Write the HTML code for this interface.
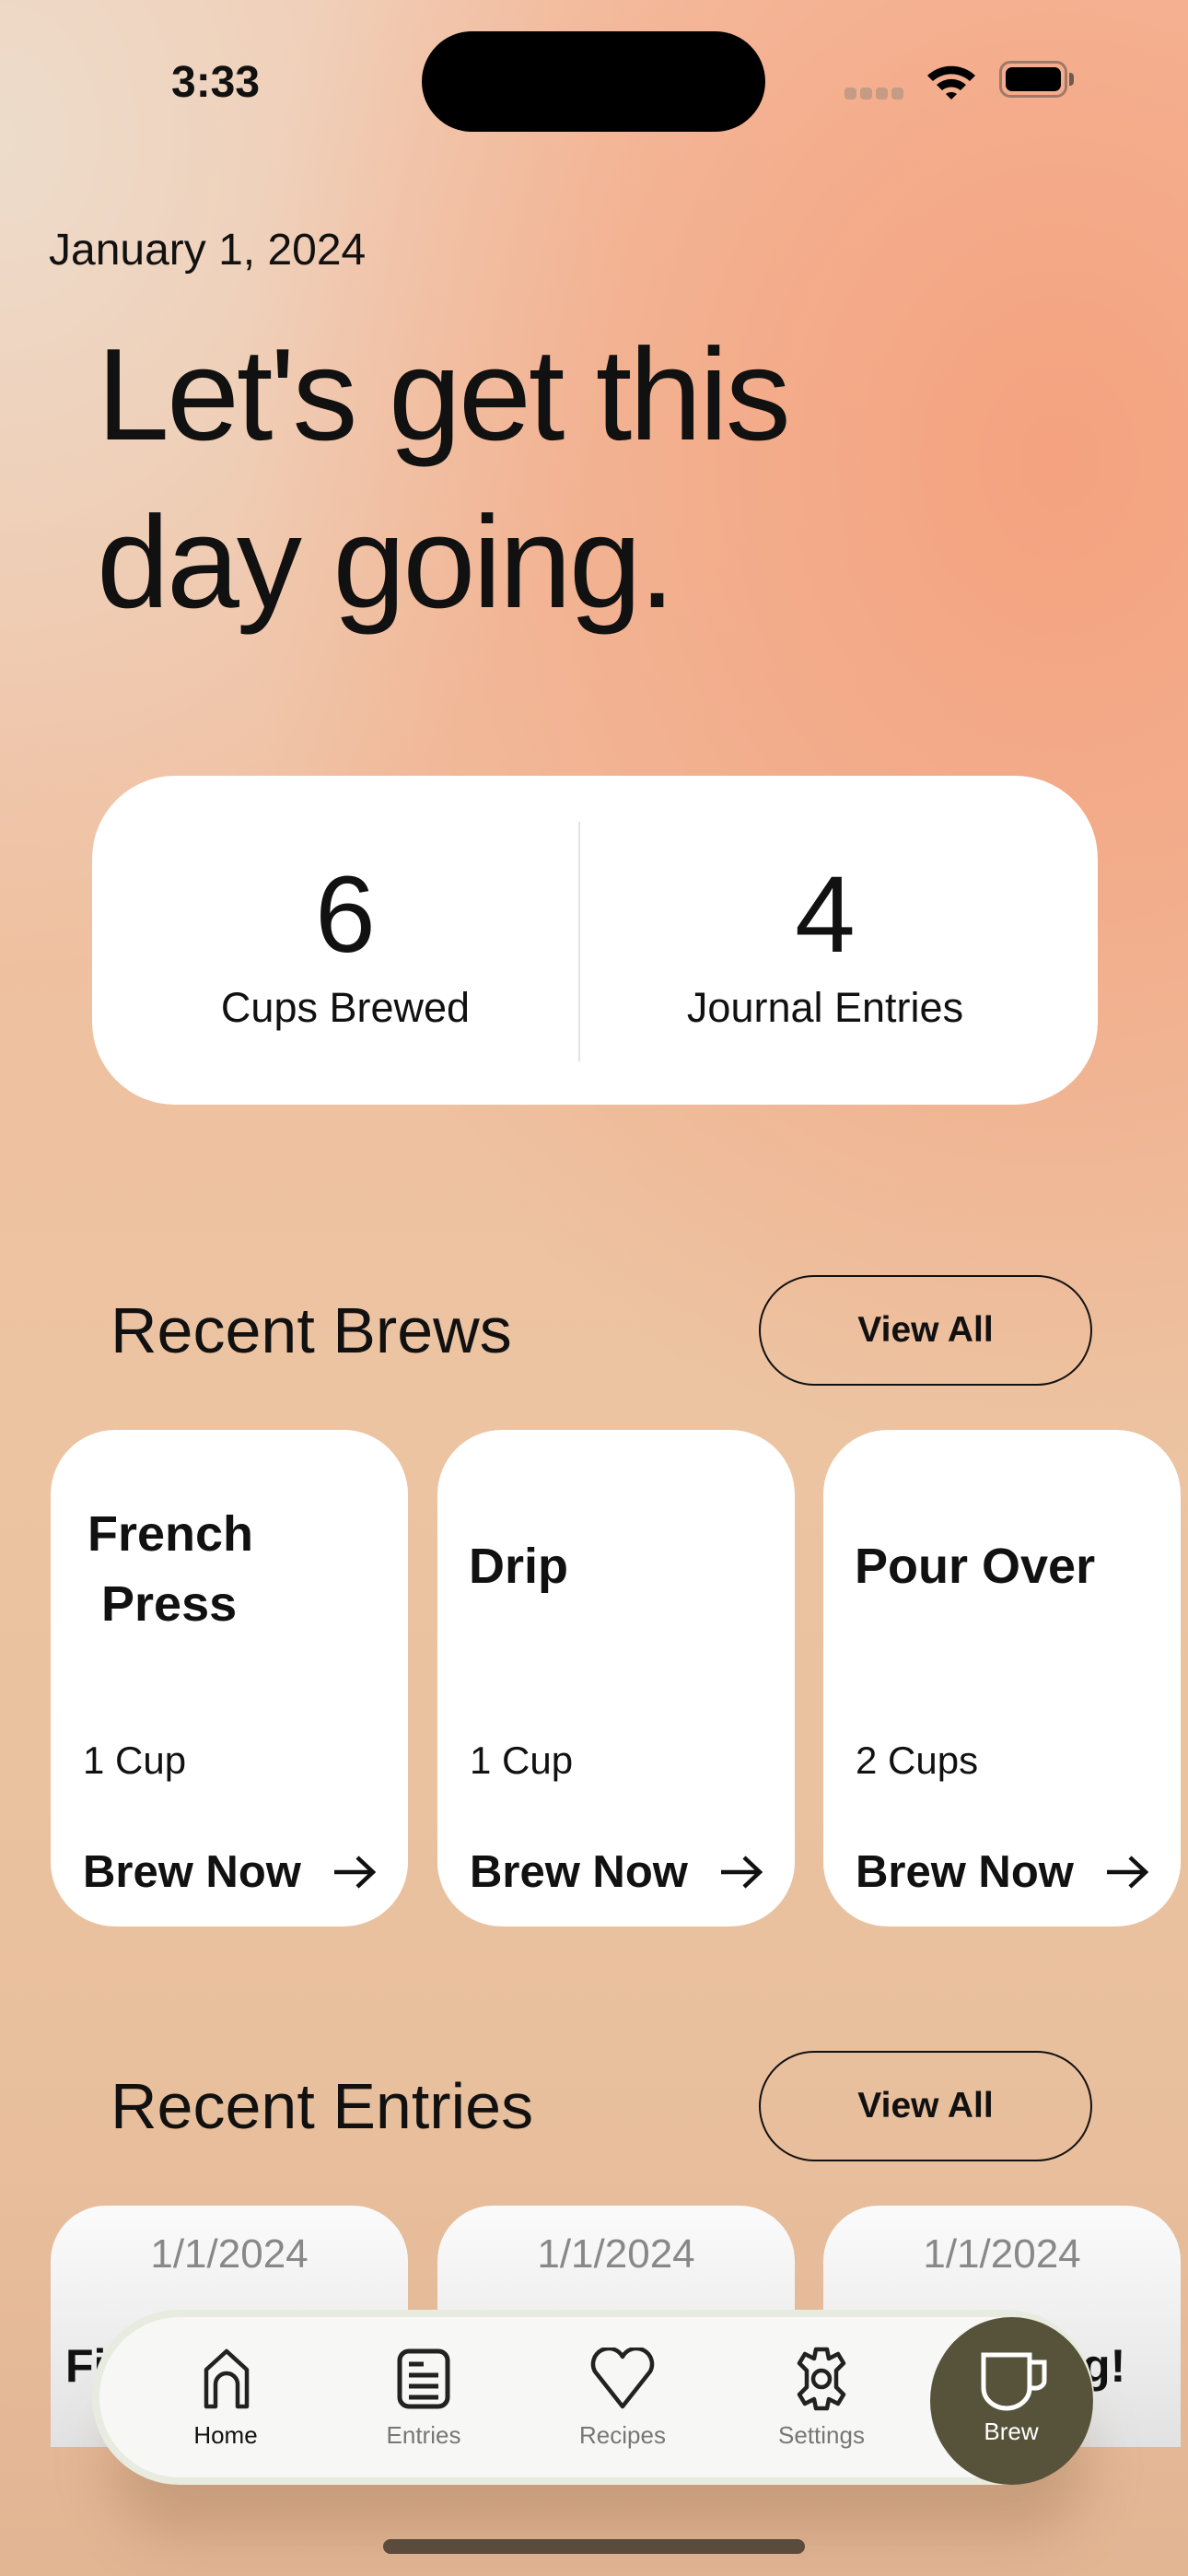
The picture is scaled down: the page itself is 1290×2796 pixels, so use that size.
<!DOCTYPE html>
<html><head><meta charset="utf-8"><style>
*{margin:0;padding:0;box-sizing:border-box}
body{width:1290px;height:2796px;overflow:hidden;font-family:"Liberation Sans",sans-serif;position:relative;
background:
radial-gradient(ellipse 900px 1100px at 1150px 500px,#f4a27f 0%,rgba(244,162,127,0.6) 45%,rgba(244,162,127,0) 100%),
radial-gradient(ellipse 700px 900px at 0px 150px,#eddccb 0%,rgba(237,220,203,0) 100%),
linear-gradient(180deg,#f3c4a8 0%,#f0bfa0 30%,#ecc4a2 55%,#e9c09e 80%,#e2b593 100%);}
.abs{position:absolute}
.t{position:absolute;white-space:nowrap}
.card{position:absolute;background:#fff}
.btn{position:absolute;border:2.5px solid #111;border-radius:60px;display:flex;align-items:center;justify-content:center;font-weight:bold;font-size:39px;color:#111}
.bc{position:absolute;top:1552px;width:388px;height:539px;background:#fff;border-radius:70px}
.bc .ti{position:absolute;font-weight:bold;font-size:54px;color:#111;line-height:76px}
.bc .cu{position:absolute;left:35px;top:335px;font-size:42px;color:#111}
.bc .bn{position:absolute;left:35px;top:452px;font-weight:bold;font-size:49px;color:#111}
.bc svg{position:absolute;left:305px;top:460px}
.ec{position:absolute;top:2394px;width:388px;height:262px;border-radius:60px 60px 0 0;background:linear-gradient(180deg,#fbfbfb,#e2e2e2);overflow:hidden}
.ec .d{position:absolute;top:28px;width:100%;text-align:center;font-size:44px;color:#888}
.ec .e{position:absolute;top:145px;font-weight:bold;font-size:50px;color:#111}
.tab{position:absolute;text-align:center;width:160px;font-size:26px;color:#777}
</style></head><body>
<div class="t" style="left:186px;top:62px;font-size:48px;font-weight:bold;color:#111">3:33</div>
<div class="abs" style="left:458px;top:34px;width:373px;height:109px;border-radius:55px;background:#000"></div>
<div class="abs" style="left:917px;top:95px;width:13px;height:13px;border-radius:4px;background:#c59b85"></div>
<div class="abs" style="left:934px;top:95px;width:13px;height:13px;border-radius:4px;background:#c59b85"></div>
<div class="abs" style="left:951px;top:95px;width:13px;height:13px;border-radius:4px;background:#c59b85"></div>
<div class="abs" style="left:968px;top:95px;width:13px;height:13px;border-radius:4px;background:#c59b85"></div>
<svg class="abs" style="left:1003px;top:64px" width="60" height="44" viewBox="0 0 60 44"><path d="M4 18 A38 38 0 0 1 56 18 L50 24 A30 30 0 0 0 10 24Z M14 28 A24 24 0 0 1 46 28 L40 34 A16 16 0 0 0 20 34Z M24 38 A10 10 0 0 1 36 38 L30 44Z" fill="#000"/></svg>
<div class="abs" style="left:1085px;top:66px;width:74px;height:40px;border:3px solid #a07a68;border-radius:12px;padding:4px"><div style="width:100%;height:100%;background:#000;border-radius:7px"></div></div>
<div class="abs" style="left:1161px;top:79px;width:5px;height:14px;border-radius:0 4px 4px 0;background:#6e5a50"></div>

<div class="t" style="left:53px;top:244px;font-size:48px;color:#111">January 1, 2024</div>
<div class="abs" style="left:105px;top:338px;font-size:142px;line-height:182px;color:#111;letter-spacing:-3px">Let's get this<br>day going.</div>

<div class="card" style="left:100px;top:842px;width:1092px;height:357px;border-radius:90px"></div>
<div class="abs" style="left:628px;top:892px;width:2px;height:260px;background:#e2e2e2"></div>
<div class="t" style="left:275px;top:925px;width:200px;text-align:center;font-size:118px;color:#111">6</div>
<div class="t" style="left:175px;top:1068px;width:400px;text-align:center;font-size:45px;color:#111">Cups Brewed</div>
<div class="t" style="left:796px;top:925px;width:200px;text-align:center;font-size:118px;color:#111">4</div>
<div class="t" style="left:696px;top:1068px;width:400px;text-align:center;font-size:45px;color:#111">Journal Entries</div>

<div class="t" style="left:120px;top:1404px;font-size:70px;color:#111">Recent Brews</div>
<div class="btn" style="left:824px;top:1384px;width:362px;height:120px">View All</div>

<div class="bc" style="left:55px"><div class="ti" style="left:40px;top:75px">French<br>&nbsp;Press</div><div class="cu">1 Cup</div><div class="bn">Brew Now</div><svg width="50" height="40" viewBox="0 0 50 40"><path d="M3 20H45M28 4L45 20L28 36" stroke="#111" stroke-width="4.5" fill="none"/></svg></div>
<div class="bc" style="left:475px"><div class="ti" style="left:34px;top:110px">Drip</div><div class="cu">1 Cup</div><div class="bn">Brew Now</div><svg width="50" height="40" viewBox="0 0 50 40"><path d="M3 20H45M28 4L45 20L28 36" stroke="#111" stroke-width="4.5" fill="none"/></svg></div>
<div class="bc" style="left:894px"><div class="ti" style="left:34px;top:110px">Pour Over</div><div class="cu">2 Cups</div><div class="bn">Brew Now</div><svg width="50" height="40" viewBox="0 0 50 40"><path d="M3 20H45M28 4L45 20L28 36" stroke="#111" stroke-width="4.5" fill="none"/></svg></div>

<div class="t" style="left:120px;top:2246px;font-size:70px;color:#111">Recent Entries</div>
<div class="btn" style="left:824px;top:2226px;width:362px;height:120px">View All</div>

<div class="ec" style="left:55px"><div class="d">1/1/2024</div><div class="e" style="left:16px">First Brew</div></div>
<div class="ec" style="left:475px"><div class="d">1/1/2024</div><div class="e" style="left:30px">Tasting</div></div>
<div class="ec" style="left:894px"><div class="d">1/1/2024</div><div class="e" style="left:-30px">Good Morning!</div></div>

<div class="abs" style="left:120px;top:2600px;width:1060px;height:150px;border-radius:80px;background:rgba(120,80,50,0.25);filter:blur(30px)"></div>
<div class="abs" style="left:100px;top:2507px;width:1088px;height:190px;border-radius:95px;background:#f7f7f6;border:8px solid #e8ebdf"></div>
<div class="abs" style="left:1010px;top:2515px;width:177px;height:182px;border-radius:50%;background:#57533a"></div>
<svg class="abs" style="left:220px;top:2548px" width="52" height="68" viewBox="0 0 52 68"><path d="M4 64V24L26 4L48 24V64H38V40A12 12 0 0 0 14 40V64Z" stroke="#222" stroke-width="4.5" fill="none" stroke-linejoin="round"/></svg>
<svg class="abs" style="left:430px;top:2548px" width="60" height="68" viewBox="0 0 60 68"><rect x="4" y="4" width="52" height="60" rx="10" stroke="#222" stroke-width="5" fill="none"/><path d="M14 18H30M14 30H46M14 42H46M14 54H46" stroke="#222" stroke-width="5"/></svg>
<svg class="abs" style="left:640px;top:2548px" width="72" height="68" viewBox="0 0 72 68"><path d="M36 64L6 26A16 16 0 0 1 36 10A16 16 0 0 1 66 26Z" stroke="#222" stroke-width="4.5" fill="none" stroke-linejoin="round"/></svg>
<svg class="abs" style="left:862px;top:2546px" width="60" height="72" viewBox="0 0 60 72"><path d="M24 4H36L38 14L48 9L54 19L46 27V45L54 53L48 63L38 58L36 68H24L22 58L12 63L6 53L14 45V27L6 19L12 9L22 14Z" stroke="#222" stroke-width="4.5" fill="none" stroke-linejoin="round"/><circle cx="30" cy="36" r="9" stroke="#222" stroke-width="4.5" fill="none"/></svg>
<svg class="abs" style="left:1060px;top:2552px" width="82" height="66" viewBox="0 0 82 66"><path d="M8 4H58V40A25 22 0 0 1 8 40Z M58 12H74V32A10 8 0 0 1 62 40H58" stroke="#fff" stroke-width="5" fill="none"/></svg>
<div class="tab" style="left:165px;top:2628px;color:#111">Home</div>
<div class="tab" style="left:380px;top:2628px">Entries</div>
<div class="tab" style="left:596px;top:2628px">Recipes</div>
<div class="tab" style="left:812px;top:2628px">Settings</div>
<div class="tab" style="left:1018px;top:2624px;color:#fff">Brew</div>

<div class="abs" style="left:416px;top:2756px;width:458px;height:16px;border-radius:8px;background:#5b4b3d"></div>
</body></html>
